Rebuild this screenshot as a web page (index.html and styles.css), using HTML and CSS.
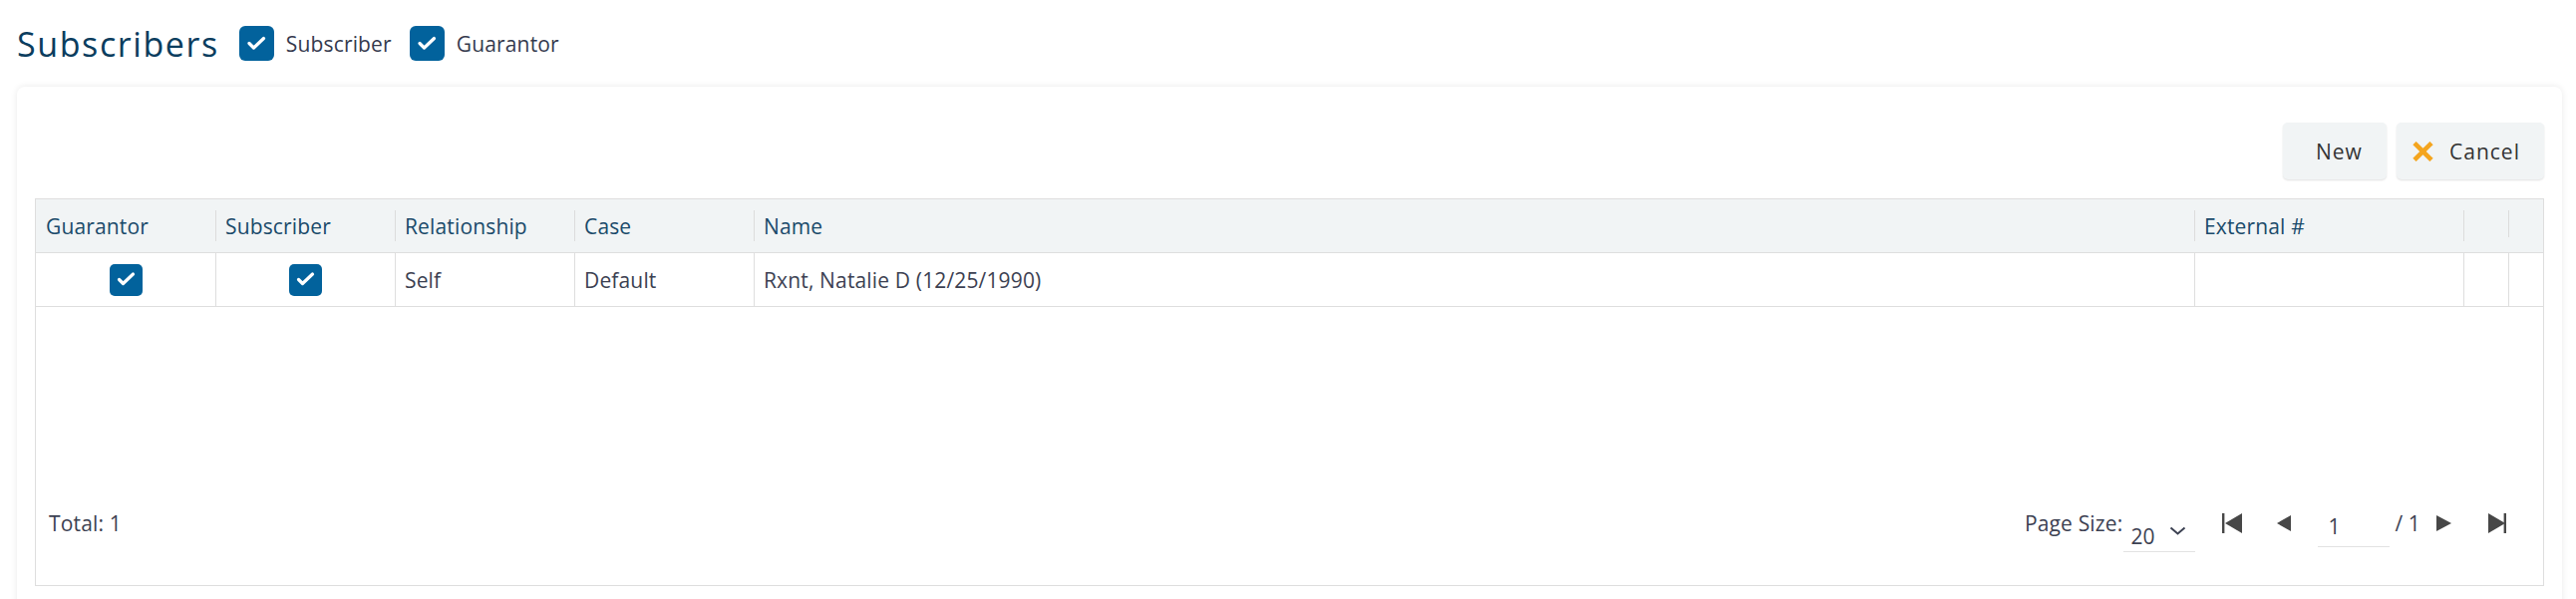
FILE: index.html
```html
<!DOCTYPE html>
<html>
<head>
<meta charset="utf-8">
<link rel="stylesheet" href="styles.css">
</head>
<body>
<div class="page">
  <div class="head">
    <h1 class="title">Subscribers</h1>
    <label class="chk-label">
      <span class="cb cb-lg"><svg viewBox="0 0 35 35"><polyline points="10,17.5 14.5,22 24.5,12.5"/></svg></span>
      <span>Subscriber</span>
    </label>
    <label class="chk-label">
      <span class="cb cb-lg"><svg viewBox="0 0 35 35"><polyline points="10,17.5 14.5,22 24.5,12.5"/></svg></span>
      <span>Guarantor</span>
    </label>
  </div>

  <div class="card">
    <div class="toolbar">
      <button class="btn btn-new">New</button>
      <button class="btn btn-cancel"><svg class="x-icon" viewBox="0 0 21 20"><path d="M3.6 3.2 L17.4 16.8 M17.4 3.2 L3.6 16.8"/></svg>Cancel</button>
    </div>

    <div class="grid">
      <div class="grid-head">
        <div class="hc first"><span>Guarantor</span></div>
        <div class="hc"><span>Subscriber</span></div>
        <div class="hc"><span>Relationship</span></div>
        <div class="hc"><span>Case</span></div>
        <div class="hc"><span>Name</span></div>
        <div class="hc"><span>External #</span></div>
        <div class="hc"><span></span></div>
        <div class="hc short"><span></span></div>
      </div>
      <div class="grid-row">
        <div class="c first center"><span class="cb cb-sm"><svg viewBox="0 0 33 32"><polyline points="9.5,15.5 13.5,19.5 23.5,10"/></svg></span></div>
        <div class="c center"><span class="cb cb-sm"><svg viewBox="0 0 33 32"><polyline points="9.5,15.5 13.5,19.5 23.5,10"/></svg></span></div>
        <div class="c">Self</div>
        <div class="c">Default</div>
        <div class="c">Rxnt, Natalie D (12/25/1990)</div>
        <div class="c"></div>
        <div class="c"></div>
        <div class="c"></div>
      </div>
      <div class="grid-body"></div>
      <div class="grid-foot">
        <div class="total">Total: 1</div>
        <div class="pager">
          <span class="ps-label">Page Size:</span>
          <span class="ps-select"><span class="ps-val">20</span><svg class="chev" viewBox="0 0 17 9"><polyline points="1.5,1.5 8.5,7.5 15.5,1.5"/></svg></span>
          <svg class="pg first-pg" viewBox="0 0 20 20"><rect x="0" y="0" width="2.4" height="20"/><polygon points="3,10 20,0 20,20"/></svg>
          <svg class="pg prev-pg" viewBox="0 0 14 16"><polygon points="0,8 14,0 14,16"/></svg>
          <span class="pg-input">1</span>
          <span class="pg-total">/ 1</span>
          <svg class="pg next-pg" viewBox="0 0 15 16"><polygon points="15,8 0,0 0,16"/></svg>
          <svg class="pg last-pg" viewBox="0 0 20 20"><polygon points="0,0 17,10 0,20"/><rect x="15.6" y="0" width="2.4" height="20"/></svg>
        </div>
      </div>
    </div>
  </div>
</div>
</body>
</html>
```

FILE: styles.css
```css
* { box-sizing: border-box; }
html, body { margin: 0; padding: 0; background: #ffffff; }
body {
  font-family: "Open Sans", "Liberation Sans", sans-serif;
  font-size: 21px;
  letter-spacing: 0.15px;
  color: #3c4152;
  width: 2584px;
  height: 601px;
  overflow: hidden;
}
.page { padding: 0 14px 0 17px; }

.head {
  display: flex;
  align-items: center;
  height: 87px;
}
.title {
  margin: 0 20px 0 0;
  font-size: 34px;
  font-weight: 400;
  letter-spacing: 1.6px;
  color: #0b3d5e;
  line-height: 40px;
}
.chk-label {
  display: flex;
  align-items: center;
  gap: 12px;
  margin-right: 18px;
  color: #353a4e;
  font-size: 21px;
}

.cb {
  display: inline-flex;
  background: #02629c;
  border-radius: 6px;
}
.cb svg { width: 100%; height: 100%; }
.cb polyline {
  fill: none;
  stroke: #ffffff;
  stroke-width: 3.2;
  stroke-linecap: round;
  stroke-linejoin: round;
}
.cb-lg { width: 35px; height: 35px; }
.cb-sm { width: 33px; height: 32px; border-radius: 5px; }

.card {
  background: #ffffff;
  border-radius: 8px;
  box-shadow: 0 0 7px rgba(0, 0, 0, 0.09);
  padding: 36px 18px 40px 18px;
  height: 560px;
}

.toolbar {
  display: flex;
  justify-content: flex-end;
  gap: 10px;
  height: 57px;
}
.btn {
  font-family: inherit;
  font-size: 21px;
  letter-spacing: 1px;
  color: #333333;
  background: #f1f4f5;
  border: none;
  border-radius: 5px;
  box-shadow: 0 1px 2px rgba(0, 0, 0, 0.12);
  height: 57px;
  display: flex;
  align-items: center;
  padding: 0 23px 0 0;
}
.btn-new { width: 104px; padding-left: 33px; }
.btn-cancel { width: 148px; padding-left: 16px; }
.x-icon { width: 21px; height: 20px; margin-right: 16px; flex-shrink: 0; }
.x-icon path { stroke: #f4a51f; stroke-width: 4.6; stroke-linecap: square; fill: none; }

.grid {
  margin-top: 19px;
  border: 1px solid #dedede;
  height: 389px;
  display: flex;
  flex-direction: column;
}
.grid-head, .grid-row {
  display: grid;
  grid-template-columns: 180px 180px 180px 180px 1445px 270px 45px 1fr;
}
.grid-head {
  background: #f1f4f5;
  align-items: center;
  border-bottom: 1px solid #dedede;
  height: 54px;
  color: #1a4a6a;
}
.hc { height: 31px; border-left: 1px solid #dcdcdc; padding-left: 9px; display: flex; align-items: center; white-space: nowrap; }
.hc.first { border-left: none; padding-left: 10px; }
.hc.short { height: 27px; align-self: start; margin-top: 11px; }

.grid-row {
  height: 54px;
  border-bottom: 1px solid #dedede;
}
.c {
  border-left: 1px solid #dedede;
  padding-left: 9px;
  display: flex;
  align-items: center;
  white-space: nowrap;
  color: #3c4152;
}
.c.first { border-left: none; }
.c.center { justify-content: center; padding-left: 0; }

.grid-body { flex: 1; }
.grid-foot {
  height: 60px;
  margin-bottom: 32px;
  display: flex;
  align-items: center;
  justify-content: space-between;
  padding: 0 35px 0 13px;
}
.total { color: #3c4152; }
.pager { display: flex; align-items: center; color: #3c4152; }
.ps-label { margin-right: 1px; }
.ps-select {
  display: flex;
  align-items: center;
  width: 72px;
  height: 44px;
  padding: 12px 0 0 7px;
  border-bottom: 1px solid #e2e2e2;
  margin-top: 14px;
}
.ps-val { width: 39px; }
.chev { width: 17px; height: 9px; margin-top: -10px; }
.chev polyline { fill: none; stroke: #3c4152; stroke-width: 2; }
.pg { fill: #474747; }
.first-pg { width: 20px; height: 20px; margin-left: 27px; }
.prev-pg { width: 14px; height: 16px; margin-left: 35px; }
.pg-input {
  width: 72px;
  height: 40px;
  padding: 5px 0 0 10px;
  margin-left: 27px;
  margin-top: 8px;
  border-bottom: 1px solid #e2e2e2;
  line-height: 28px;
}
.pg-total { margin-left: 5px; }
.next-pg { width: 15px; height: 16px; margin-left: 16px; }
.last-pg { width: 20px; height: 20px; margin-left: 37px; }
```
